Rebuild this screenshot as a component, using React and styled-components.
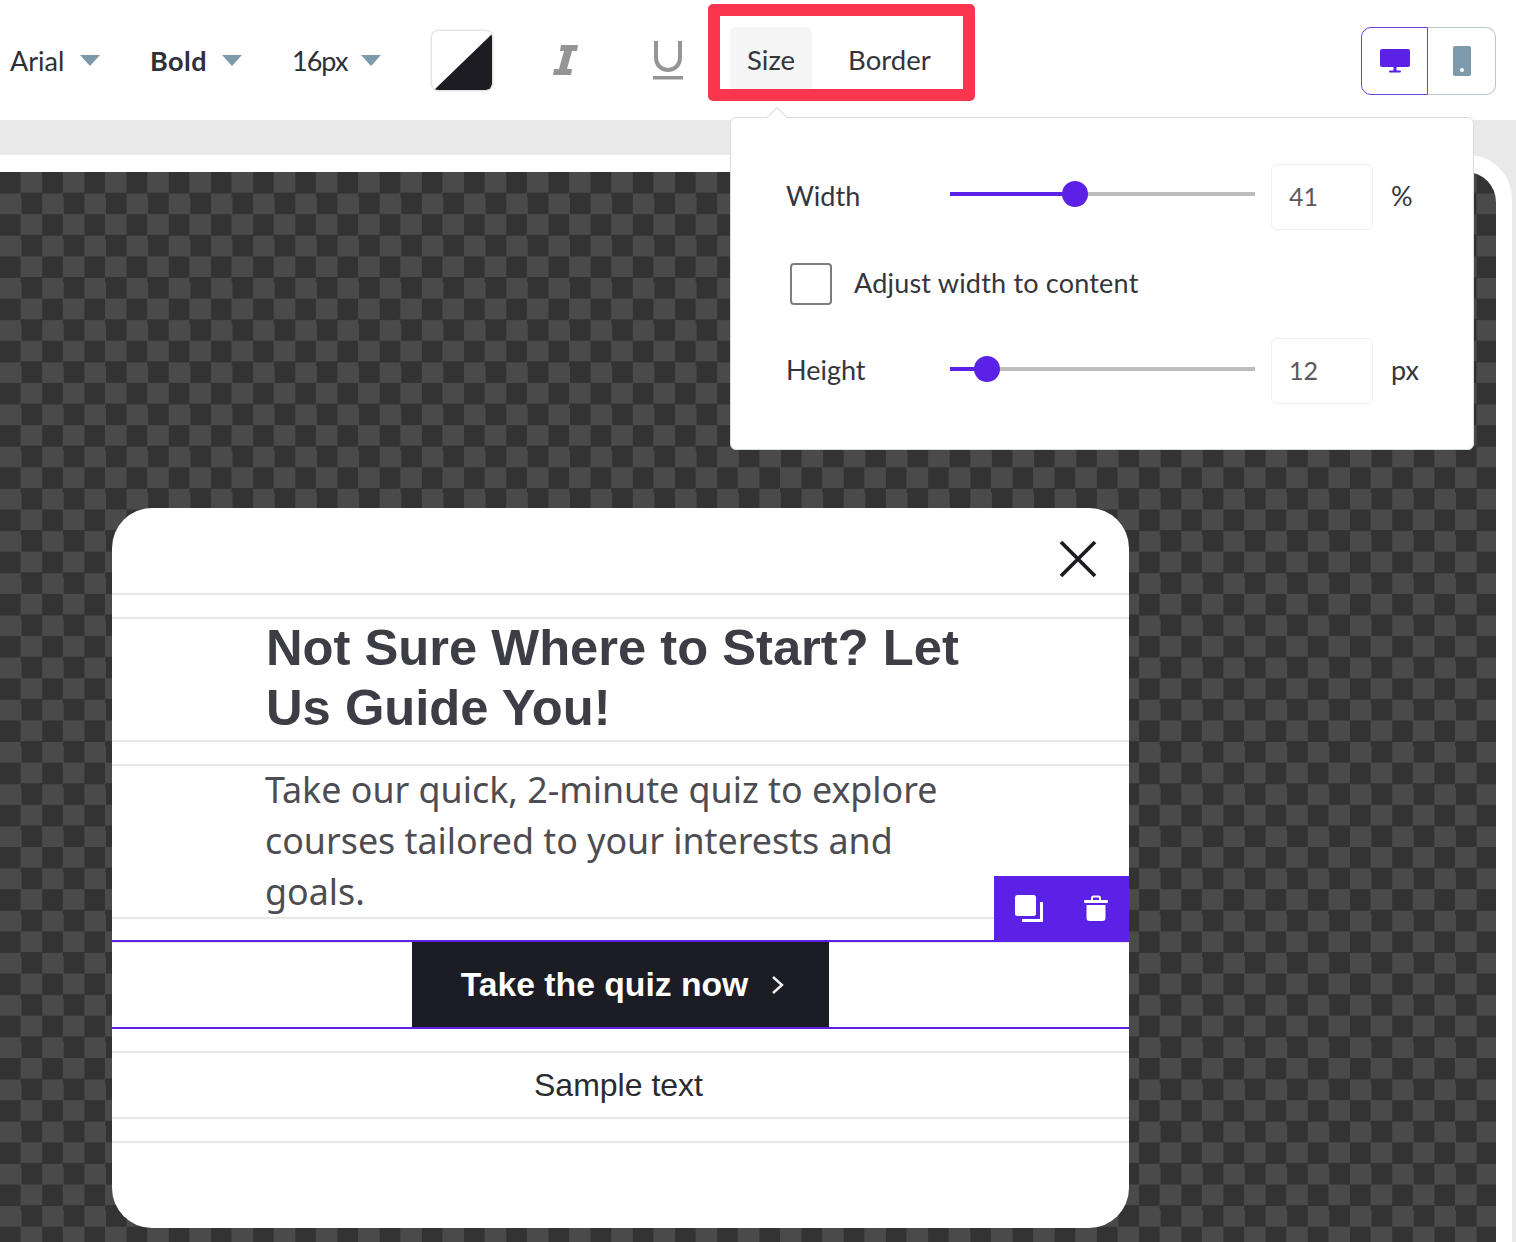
import React from 'react';
import styled, { createGlobalStyle } from 'styled-components';

const PURPLE = '#5b21e6';
const UI_FONT = '"Lato", "Noto Sans", sans-serif';

const GlobalStyle = createGlobalStyle`
    html, body {
        margin: 0;
        padding: 0;
        background: #e9e9e9;
        height: 1242px;
        overflow: hidden;
    }
    * {
        box-sizing: border-box;
    }
`;

const Caret = () => (
    <CaretIcon viewBox="0 0 20 11">
        <path d="M0 0h20L10 11z" fill="#7c9aa9" />
    </CaretIcon>
);

const Dropdown = ({ label, bold, spacing, width }) => (
    <DropdownBox $width={width}>
        <DropdownLabel $bold={bold} $spacing={spacing}>
            {label}
        </DropdownLabel>
        <Caret />
    </DropdownBox>
);

const Slider = ({ value, lift }) => (
    <SliderTrack $lift={lift}>
        <SliderFill style={{ width: value }} />
        <SliderThumb style={{ left: value }} />
    </SliderTrack>
);

export default function App() {
    return (
        <Page>
            <GlobalStyle />
            <Toolbar>
                <Dropdown label="Arial" width={140} />
                <Dropdown label="Bold" bold spacing={0.5} width={142} />
                <Dropdown label="16px" spacing={-1} width={139} />
                <Swatch>
                    <svg viewBox="0 0 60 59" width="60" height="59">
                        <path d="M60 3L2 59h52a6 6 0 0 0 6-6z" fill="#1c1c22" />
                    </svg>
                </Swatch>
                <ToolIcon $left={59}>
                    <svg viewBox="0 0 28 32" width="28" height="32">
                        <path
                            d="M10 1h17l-1 6h-5l-5 18h5l-1 6H2l1-6h5l5-18H9z"
                            fill="#959595"
                        />
                    </svg>
                </ToolIcon>
                <ToolIcon $left={74}>
                    <svg viewBox="0 0 30 40" width="30" height="40">
                        <path
                            d="M3 1v17a12 12 0 0 0 24 0V1"
                            fill="none"
                            stroke="#959595"
                            strokeWidth="4"
                        />
                        <rect x="0" y="36" width="30" height="3.5" fill="#959595" />
                    </svg>
                </ToolIcon>
                <TabGroup>
                    <Tab $active>Size</Tab>
                    <Tab>Border</Tab>
                </TabGroup>
                <DeviceSwitch>
                    <DeviceButton $active>
                        <svg viewBox="0 0 30 24" width="30" height="24">
                            <rect y="0" width="30" height="18" rx="2" fill={PURPLE} />
                            <rect x="13.5" y="18" width="3" height="4" fill={PURPLE} />
                            <rect x="9" y="21.5" width="12" height="2" rx="1" fill={PURPLE} />
                        </svg>
                    </DeviceButton>
                    <DeviceButton>
                        <svg viewBox="0 0 18 30" width="18" height="30">
                            <rect width="18" height="30" rx="2" fill="#7c9aa9" />
                            <circle cx="9" cy="24" r="2" fill="#fff" />
                        </svg>
                    </DeviceButton>
                </DeviceSwitch>
            </Toolbar>

            <Popover>
                <PopoverRow>
                    <FieldLabel>Width</FieldLabel>
                    <Slider value="41%" lift={6} />
                    <NumberBox>41</NumberBox>
                    <Unit>%</Unit>
                </PopoverRow>
                <CheckRow>
                    <CheckBox />
                    <FieldLabel $spacing={0.2}>Adjust width to content</FieldLabel>
                </CheckRow>
                <PopoverRow>
                    <FieldLabel>Height</FieldLabel>
                    <Slider value="12%" lift={4} />
                    <NumberBox>12</NumberBox>
                    <Unit>px</Unit>
                </PopoverRow>
            </Popover>

            <CanvasFrame>
                <Checker>
                    <Modal>
                        <CloseRow>
                            <svg viewBox="0 0 38 38" width="38" height="38">
                                <path
                                    d="M2 2l34 34M36 2L2 36"
                                    stroke="#1c1c22"
                                    strokeWidth="3.8"
                                    fill="none"
                                />
                            </svg>
                        </CloseRow>
                        <Spacer />
                        <HeadingRow>
                            <Heading>
                                Not Sure Where to Start? Let
                                <br />
                                Us Guide You!
                            </Heading>
                        </HeadingRow>
                        <Spacer />
                        <BodyRow>
                            <BodyText>
                                Take our quick, 2-minute quiz to explore
                                <br />
                                courses tailored to your interests and
                                <br />
                                goals.
                            </BodyText>
                        </BodyRow>
                        <Spacer />
                        <ButtonRow>
                            <RowActions>
                                <svg viewBox="0 0 30 30" width="30" height="30">
                                    <rect x="1" y="1" width="21" height="21" rx="2.5" fill="#fff" />
                                    <path
                                        d="M27.5 8v18.5H8"
                                        fill="none"
                                        stroke="#fff"
                                        strokeWidth="3"
                                    />
                                </svg>
                                <svg viewBox="0 0 26 28" width="26" height="28">
                                    <rect x="1" y="5" width="24" height="3" rx="1" fill="#fff" />
                                    <path
                                        d="M9 5V3a1.5 1.5 0 0 1 1.5-1.5h5A1.5 1.5 0 0 1 17 3v2"
                                        fill="none"
                                        stroke="#fff"
                                        strokeWidth="2"
                                    />
                                    <path
                                        d="M3.5 10h19v13a3 3 0 0 1-3 3h-13a3 3 0 0 1-3-3z"
                                        fill="#fff"
                                    />
                                </svg>
                            </RowActions>
                            <QuizButton>
                                Take the quiz now
                                <svg viewBox="0 0 13 20" width="13" height="20">
                                    <path
                                        d="M2 2l9 8-9 8"
                                        fill="none"
                                        stroke="#f2f2f2"
                                        strokeWidth="2.4"
                                    />
                                </svg>
                            </QuizButton>
                        </ButtonRow>
                        <Spacer />
                        <SampleRow>Sample text</SampleRow>
                        <Spacer />
                        <FooterRow />
                    </Modal>
                </Checker>
            </CanvasFrame>
        </Page>
    );
}

const Page = styled.div`
    position: relative;
    width: 1516px;
    height: 1242px;
    overflow: hidden;
    background: #e9e9e9;
    font-family: ${UI_FONT};
`;

const Toolbar = styled.div`
    display: flex;
    align-items: center;
    height: 120px;
    padding-left: 10px;
    background: #fff;
`;

const DropdownBox = styled.div`
    display: flex;
    align-items: center;
    justify-content: space-between;
    flex: none;
    width: ${props => props.$width - 50}px;
    margin-right: 50px;
`;

const DropdownLabel = styled.span`
    font-size: 27px;
    font-weight: ${props => (props.$bold ? 700 : 400)};
    letter-spacing: ${props => props.$spacing || 0}px;
    color: #2f2f36;
`;

const CaretIcon = styled.svg`
    width: 20px;
    height: 11px;
    flex: none;
`;

const Swatch = styled.div`
    flex: none;
    width: 60px;
    height: 59px;
    margin-left: 1px;
    border-radius: 6px;
    background: #fff;
    box-shadow: 0 0 3px rgba(0, 0, 0, 0.3);
    overflow: hidden;
    svg {
        display: block;
    }
`;

const ToolIcon = styled.div`
    flex: none;
    margin-left: ${props => props.$left}px;
    svg {
        display: block;
    }
`;

const TabGroup = styled.div`
    display: flex;
    align-self: flex-start;
    flex: none;
    width: 267px;
    height: 97px;
    margin: 4px 0 0 25px;
    padding: 11px 0 0 10px;
    border: 12px solid #fa364f;
    border-radius: 5px;
`;

const Tab = styled.div`
    display: flex;
    align-items: center;
    justify-content: center;
    height: 62px;
    padding: 2px 17px 0;
    margin-right: ${props => (props.$active ? '19px' : '0')};
    background: ${props => (props.$active ? '#f5f5f5' : 'transparent')};
    border-radius: 6px 6px 0 0;
    font-size: 27.5px;
    color: #35353c;
`;

const DeviceSwitch = styled.div`
    display: flex;
    flex: none;
    width: 135px;
    height: 68px;
    margin-left: auto;
    margin-right: 20px;
    margin-top: 1px;
`;

const DeviceButton = styled.div`
    display: flex;
    align-items: center;
    justify-content: center;
    flex: none;
    width: ${props => (props.$active ? '67px' : '68px')};
    background: #fff;
    border: 1.5px solid ${props => (props.$active ? '#6d3fe0' : '#b9c3c8')};
    border-left-width: ${props => (props.$active ? '1.5px' : '0')};
    border-radius: ${props => (props.$active ? '10px 0 0 10px' : '0 10px 10px 0')};
`;

const Popover = styled.div`
    position: absolute;
    z-index: 5;
    left: 730px;
    top: 117px;
    display: flex;
    flex-direction: column;
    width: 744px;
    height: 333px;
    padding: 46px 0 0 55px;
    background: #fff;
    border: 1px solid #d5dde0;
    border-radius: 6px;

    &::before {
        content: '';
        position: absolute;
        left: 38px;
        top: -8px;
        width: 15px;
        height: 15px;
        background: #fff;
        border-left: 1px solid #d5dde0;
        border-top: 1px solid #d5dde0;
        transform: rotate(45deg);
    }
`;

const PopoverRow = styled.div`
    display: grid;
    grid-template-columns: 164px 305px 102px auto;
    align-items: center;
    height: 66px;
`;

const CheckRow = styled.div`
    display: flex;
    align-items: center;
    gap: 22px;
    height: 108px;
    padding-left: 4px;
`;

const FieldLabel = styled.span`
    margin-top: -4px;
    font-size: 27px;
    letter-spacing: ${props => props.$spacing || 0}px;
    color: #35353c;
`;

const SliderTrack = styled.div`
    position: relative;
    height: 4px;
    margin-top: ${props => -props.$lift}px;
    background: #bdbdbd;
`;

const SliderFill = styled.div`
    position: absolute;
    left: 0;
    top: 0;
    height: 100%;
    background: ${PURPLE};
`;

const SliderThumb = styled.div`
    position: absolute;
    top: 50%;
    width: 26px;
    height: 26px;
    margin: -13px 0 0 -13px;
    border-radius: 50%;
    background: ${PURPLE};
`;

const NumberBox = styled.div`
    display: flex;
    align-items: center;
    height: 66px;
    margin-left: 16px;
    width: 102px;
    padding: 0 0 3px 17px;
    border: 1px solid #f0f0f0;
    border-radius: 6px;
    font-size: 25px;
    color: #5a5a60;
`;

const Unit = styled.span`
    margin: -4px 0 0 34px;
    font-size: 27px;
    color: #35353c;
`;

const CheckBox = styled.div`
    flex: none;
    width: 42px;
    height: 42px;
    border: 2.5px solid #7d7d7d;
    border-radius: 4px;
    background: #fff;
`;

const CanvasFrame = styled.div`
    width: 1512px;
    height: 1087px;
    margin-top: 35px;
    padding: 17px 16px 0 0;
    background: #fff;
    border-top-right-radius: 44px;
`;

const Checker = styled.div`
    height: 100%;
    padding: 336px 0 0 112px;
    border-top-right-radius: 30px;
    background-color: #333;
    background-image: conic-gradient(
        #4a4a4a 25%,
        #333 0 50%,
        #4a4a4a 0 75%,
        #333 0
    );
    background-size: 42.2px 42.2px;
`;

const Modal = styled.div`
    display: flex;
    flex-direction: column;
    width: 1017px;
    height: 720px;
    background: #fff;
    border-radius: 40px;
    overflow: hidden;
`;

const Spacer = styled.div`
    flex: none;
    height: 26px;
    border-top: 2px solid #e8e8e8;
    border-bottom: 2px solid #e8e8e8;
`;

const CloseRow = styled.div`
    display: flex;
    justify-content: flex-end;
    flex: none;
    height: 85px;
    padding: 32px 32px 0 0;
`;

const HeadingRow = styled.div`
    flex: none;
    height: 121px;
    padding-left: 154px;
`;

const Heading = styled.h1`
    margin: -1px 0 0;
    font-family: "Liberation Sans", Arial, sans-serif;
    font-size: 50.7px;
    font-weight: 700;
    line-height: 60px;
    color: #3d3d46;
`;

const BodyRow = styled.div`
    flex: none;
    height: 151px;
    padding-left: 153px;
`;

const BodyText = styled.p`
    margin: -2px 0 0;
    font-family: "Noto Sans", sans-serif;
    font-size: 35.8px;
    line-height: 51px;
    color: #4c4c52;
`;

const ButtonRow = styled.div`
    position: relative;
    display: flex;
    justify-content: center;
    flex: none;
    height: 89px;
    margin: -3px 0 -2px;
    border-top: 2px solid ${PURPLE};
    border-bottom: 2px solid ${PURPLE};
`;

const RowActions = styled.div`
    position: absolute;
    right: 0;
    bottom: 85px;
    display: flex;
    align-items: center;
    justify-content: space-between;
    width: 135px;
    height: 66px;
    padding: 0 20px;
    background: ${PURPLE};
`;

const QuizButton = styled.div`
    display: flex;
    align-items: center;
    gap: 23px;
    justify-content: center;
    width: 417px;
    padding-left: 4px;
    background: #1c1c24;
    color: #fff;
    font-family: "Liberation Sans", Arial, sans-serif;
    font-size: 33.7px;
    font-weight: 700;
`;

const SampleRow = styled.div`
    display: flex;
    align-items: center;
    justify-content: center;
    flex: none;
    height: 64px;
    padding-right: 4px;
    font-family: "Liberation Sans", Arial, sans-serif;
    font-size: 32px;
    color: #2a2a30;
`;

const FooterRow = styled.div`
    flex: 1;
`;
